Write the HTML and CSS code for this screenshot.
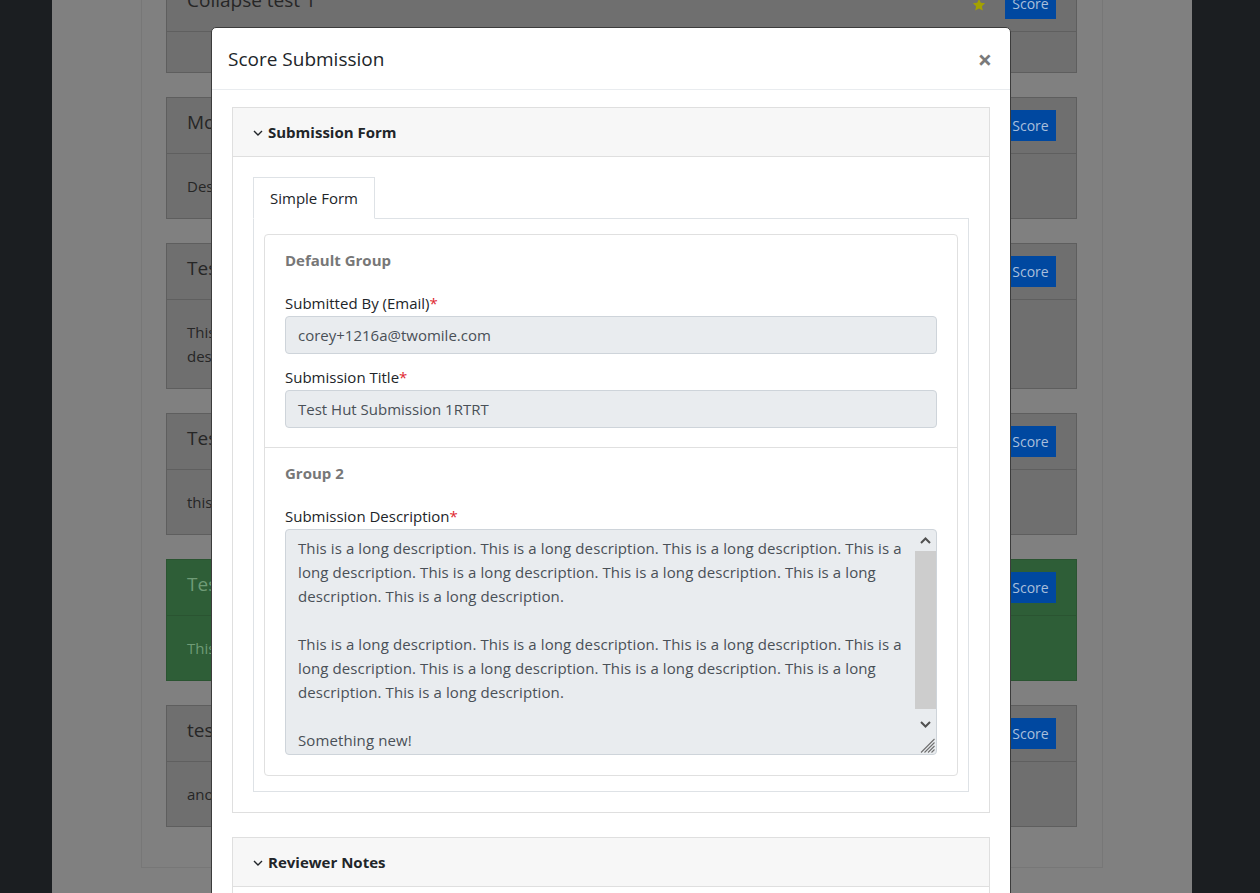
FILE: index.html
```
<!DOCTYPE html>
<html lang="en">
<head>
  <meta charset="UTF-8" />
  <meta name="viewport" content="width=device-width, initial-scale=1.0"/>
  <title>Submissions - Score Submission</title>
  <link rel="stylesheet" href="styles.css">
</head>
<body>
  <div class="app">
    <aside class="side side-left"></aside>

    <main class="main">
      <div class="container">
        <div class="sub-card">
          <div class="sub-head">
            <span class="sub-title">Collapse test 1</span>
            <span class="sub-actions">
              <svg class="star" width="14" height="14" viewBox="0 0 24 24"><polygon points="12,1.5 15.1,8.3 22.5,9.1 17,14.1 18.5,21.5 12,17.8 5.5,21.5 7,14.1 1.5,9.1 8.9,8.3" fill="#a3a100"/></svg>
              <button class="btn-score">Score</button>
            </span>
          </div>
          <div class="sub-body"></div>
        </div>

        <div class="sub-card">
          <div class="sub-head">
            <span class="sub-title">Mobile app submission</span>
            <button class="btn-score">Score</button>
          </div>
          <div class="sub-body">Description of the mobile app submission.</div>
        </div>

        <div class="sub-card">
          <div class="sub-head">
            <span class="sub-title">Test submission 3</span>
            <button class="btn-score">Score</button>
          </div>
          <div class="sub-body">This is a test submission with a somewhat longer text so that it runs over more than one line in the card<br>description area.</div>
        </div>

        <div class="sub-card">
          <div class="sub-head">
            <span class="sub-title">Test 4</span>
            <button class="btn-score">Score</button>
          </div>
          <div class="sub-body">this one is short.</div>
        </div>

        <div class="sub-card scored">
          <div class="sub-head">
            <span class="sub-title">Test Hut Submission 1RTRT</span>
            <button class="btn-score">Score</button>
          </div>
          <div class="sub-body">This is a long description.</div>
        </div>

        <div class="sub-card">
          <div class="sub-head">
            <span class="sub-title">test</span>
            <button class="btn-score">Score</button>
          </div>
          <div class="sub-body">another one</div>
        </div>
      </div>
    </main>

    <aside class="side side-right"></aside>
  </div>

  <div class="modal">
    <div class="modal-dialog">
      <div class="modal-header">
        <h5 class="modal-title">Score Submission</h5>
        <span class="close">&times;</span>
      </div>

      <div class="modal-body">
        <div class="card">
          <div class="card-header">
            <svg class="chev" width="10" height="6" viewBox="0 0 10 6"><polyline points="1,1 5,5 9,1" fill="none" stroke="#212529" stroke-width="1.4"/></svg>
            Submission Form
          </div>
          <div class="card-body">
            <div class="nav-tabs">
              <span class="nav-link active">Simple Form</span>
            </div>
            <div class="tab-content">
              <div class="groups">
                <div class="group">
                  <div class="group-title">Default Group</div>
                  <div class="form-group">
                    <label>Submitted By (Email)<span class="req">*</span></label>
                    <div class="form-control">corey+1216a@twomile.com</div>
                  </div>
                  <div class="form-group">
                    <label>Submission Title<span class="req">*</span></label>
                    <div class="form-control">Test Hut Submission 1RTRT</div>
                  </div>
                </div>
                <div class="group">
                  <div class="group-title">Group 2</div>
                  <div class="form-group">
                    <label>Submission Description<span class="req">*</span></label>
                    <div class="textarea">
                      <div class="textarea-text">
                        <p>This is a long description. This is a long description. This is a long description. This is a long description. This is a long description. This is a long description. This is a long description. This is a long description.</p>
                        <p>This is a long description. This is a long description. This is a long description. This is a long description. This is a long description. This is a long description. This is a long description. This is a long description.</p>
                        <p>Something new!</p>
                      </div>
                      <div class="scrollbar">
                        <div class="scroll-btn">
                          <svg width="11" height="7" viewBox="0 0 11 7"><polyline points="1,6 5.5,1.5 10,6" fill="none" stroke="#505050" stroke-width="2"/></svg>
                        </div>
                        <div class="scroll-track"><div class="scroll-thumb"></div></div>
                        <div class="scroll-btn">
                          <svg width="11" height="7" viewBox="0 0 11 7"><polyline points="1,1 5.5,5.5 10,1" fill="none" stroke="#505050" stroke-width="2"/></svg>
                        </div>
                        <div class="grip">
                          <svg width="18" height="18" viewBox="0 0 18 18"><path d="M17.5 4 L4 17.5 M17.5 7.5 L7.5 17.5 M17.5 11 L11 17.5 M17.5 14.5 L14.5 17.5" stroke="#707070" stroke-width="1.1"/></svg>
                        </div>
                      </div>
                    </div>
                  </div>
                </div>
              </div>
            </div>
          </div>
        </div>

        <div class="card">
          <div class="card-header">
            <svg class="chev" width="10" height="6" viewBox="0 0 10 6"><polyline points="1,1 5,5 9,1" fill="none" stroke="#212529" stroke-width="1.4"/></svg>
            Reviewer Notes
          </div>
          <div class="card-body">
            <div class="notes-empty">No notes yet.</div>
          </div>
        </div>
      </div>
    </div>
  </div>
</body>
</html>
```

FILE: styles.css
```
* {
  margin: 0;
  padding: 0;
  box-sizing: border-box;
}
body {
  font-family: 'Open Sans', 'Noto Sans', sans-serif;
  font-size: 15px;
  line-height: 24px;
  color: #212529;
  background: #1b1e21;
  height: 893px;
  overflow: hidden;
}
.app {
  display: flex;
  height: 893px;
}
.side-left {
  width: 52px;
  background: #1b1e21;
}
.side-right {
  flex: 1;
  background: #1b1e21;
}
.main {
  width: 1140px;
  background: #808080;
  padding: 0 89px;
}
.container {
  margin-top: -25px;
  border: 1px solid #777;
  border-top: none;
  padding: 0 25px 40px 24px;
  display: flex;
  flex-direction: column;
  gap: 24px;
}
.sub-card {
  background: #6f6f6f;
  border: 1px solid #5e5e5e;
  color: #262626;
}
.sub-head {
  height: 56px;
  padding: 0 20px;
  display: flex;
  align-items: center;
  justify-content: space-between;
  border-bottom: 1px solid #5f5f5f;
}
.sub-title {
  font-size: 19px;
  margin-bottom: 8px;
}
.sub-actions {
  display: flex;
  align-items: center;
  gap: 19px;
}
.star {
  margin-top: 3px;
}
.btn-score {
  background: #0048a0;
  color: #a9bfdb;
  border: none;
  font-family: inherit;
  font-size: 14px;
  height: 31px;
  width: 51px;
}
.sub-body {
  padding: 20px;
  min-height: 40px;
}
.sub-card.scored {
  background: #2e5e37;
  border-color: #2a5431;
  color: #6f9b76;
}
.sub-card.scored .sub-head {
  border-bottom-color: #2a5431;
}

/* modal */
.modal {
  position: fixed;
  inset: 0;
  overflow: hidden;
}
.modal-dialog {
  width: 800px;
  margin: 27px 0 0 211px;
  background: #fff;
  border: 1px solid #3c3c3c;
  border-radius: 5px 5px 0 0;
}
.modal-header {
  display: flex;
  align-items: center;
  justify-content: space-between;
  padding: 16px 18px 15px 16px;
  border-bottom: 1px solid #e9ecef;
}
.modal-title {
  font-size: 19px;
  font-weight: 400;
  line-height: 30px;
}
.close {
  font-size: 25px;
  font-weight: 700;
  color: #7a7a7a;
  line-height: 30px;
}
.modal-body {
  padding: 17px 20px 0 20px;
}
.card {
  border: 1px solid #dfdfdf;
  margin-bottom: 24px;
}
.card-header {
  background: #f7f7f7;
  border-bottom: 1px solid #dfdfdf;
  padding: 12px 20px;
  font-weight: 700;
  display: flex;
  align-items: center;
  gap: 5px;
}
.chev {
  margin-top: 1px;
}
.card-body {
  padding: 20px;
}
.nav-tabs {
  display: flex;
  border-bottom: 1px solid #dee2e6;
}
.nav-link {
  padding: 8px 16px;
  border: 1px solid transparent;
  margin-bottom: -1px;
  font-size: 15px;
}
.nav-link.active {
  background: #fff;
  border-color: #dee2e6 #dee2e6 #fff;
}
.tab-content {
  border: 1px solid #dee2e6;
  border-top: none;
  padding: 15px 10px;
}
.groups {
  border: 1px solid #e0e0e0;
  border-radius: 4px;
}
.group {
  padding: 13px 20px 19px;
}
.group + .group {
  border-top: 1px solid #e0e0e0;
  padding-bottom: 20px;
}
.group-title {
  font-weight: 700;
  color: #777;
  margin-bottom: 19px;
}
.form-group + .form-group {
  margin-top: 11px;
}
label {
  display: block;
  margin-bottom: 1px;
}
.req {
  color: #e0262f;
}
.form-control {
  background: #e9ecef;
  border: 1px solid #ced4da;
  border-radius: 4px;
  padding: 6px 12px;
  color: #495057;
  height: 38px;
}
.textarea {
  display: flex;
  height: 226px;
  background: #e9ecef;
  border: 1px solid #ced4da;
  border-radius: 4px;
  color: #495057;
  overflow: hidden;
}
.textarea-text {
  flex: 1;
  padding: 6px 11px 6px 12px;
  overflow: hidden;
  letter-spacing: 0.1px;
}
.textarea-text p {
  margin-bottom: 24px;
}
.scrollbar {
  width: 21px;
  display: flex;
  flex-direction: column;
}
.scroll-btn {
  height: 21px;
  display: flex;
  align-items: center;
  justify-content: center;
}
.scroll-track {
  flex: 1;
}
.scroll-thumb {
  height: 158px;
  background: #cdcdcd;
}
.grip {
  height: 19px;
  display: flex;
  align-items: flex-end;
  justify-content: flex-end;
  padding: 0 1px 1px 0;
}
.notes-empty {
  color: #6c757d;
}
```
